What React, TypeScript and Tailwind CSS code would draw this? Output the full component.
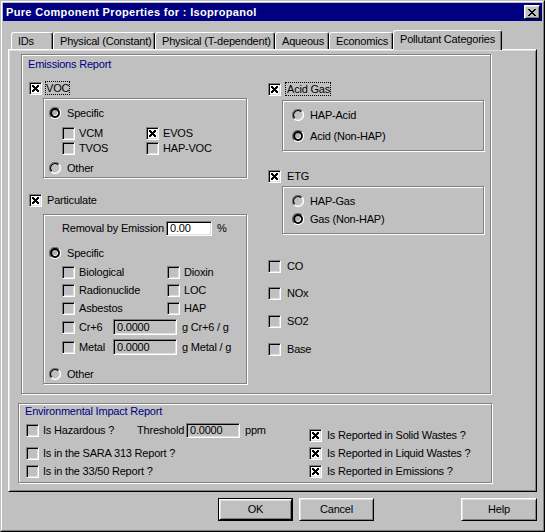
import React from "react";

const X7 = ["xx...xx", "xxx.xxx", ".xxxxx.", "..xxx..", ".xxxxx.", "xxx.xxx", "xx...xx"];
const CLOSE = ["xx....xx", ".xx..xx.", "..xxxx..", "...xx...", "..xxxx..", ".xx..xx.", "xx....xx"];

function PixelArt({ rows, color = "#000" }: { rows: string[]; color?: string }) {
  const w = rows[0].length;
  const h = rows.length;
  return (
    <svg width={w} height={h} viewBox={`0 0 ${w} ${h}`} shapeRendering="crispEdges" className="block shrink-0">
      {rows.flatMap((r, y) =>
        r.split("").map((c, x) =>
          c === "x" ? <rect key={`${x}-${y}`} x={x} y={y} width={1} height={1} fill={color} /> : null
        )
      )}
    </svg>
  );
}

function Box({ checked }: { checked?: boolean }) {
  return (
    <span
      className={
        checked
          ? "flex h-[13px] w-[13px] shrink-0 items-center justify-center border border-t-[#808080] border-l-[#808080] border-r-white border-b-white bg-white shadow-[inset_1px_1px_0_#000,inset_-1px_-1px_0_#dfdfdf]"
          : "flex h-[13px] w-[13px] shrink-0 items-center justify-center border border-t-[#808080] border-l-[#808080] border-r-white border-b-white bg-[#c0c0c0] shadow-[inset_1px_1px_0_#000,inset_-1px_-1px_0_#dfdfdf]"
      }
    >
      {checked && <PixelArt rows={X7} />}
    </span>
  );
}

function Check({
  checked,
  children,
  className = "",
  gap = "ml-[4px]",
}: {
  checked?: boolean;
  children: React.ReactNode;
  className?: string;
  gap?: string;
}) {
  return (
    <div className={`flex h-[13px] items-center ${className}`}>
      <Box checked={checked} />
      <span className={`${gap} whitespace-nowrap`}>{children}</span>
    </div>
  );
}

function Radio({ on }: { on?: boolean }) {
  return (
    <svg width="12" height="12" viewBox="0 0 12 12" className="block shrink-0">
      <circle cx="6" cy="6" r="5.5" fill="#c0c0c0" />
      <path d="M 2.11 9.89 A 5.5 5.5 0 0 1 9.89 2.11" stroke="#707070" strokeWidth="1.3" fill="none" />
      <path d="M 9.89 2.11 A 5.5 5.5 0 0 1 2.11 9.89" stroke="#ffffff" strokeWidth="1.3" fill="none" />
      {on ? (
        <>
          <circle cx="6" cy="6" r="4.9" fill="#000" />
          <circle cx="6" cy="6" r="2.9" fill="#b0b0b0" />
          <path d="M 8.1 4.6 A 2.5 2.5 0 0 1 4.6 8.1" stroke="#fff" strokeWidth="1" fill="none" />
        </>
      ) : (
        <>
          <path d="M 2.82 9.18 A 4.5 4.5 0 0 1 9.18 2.82" stroke="#000" strokeWidth="1.2" fill="none" />
          <path d="M 9.18 2.82 A 4.5 4.5 0 0 1 2.82 9.18" stroke="#dfdfdf" fill="none" />
        </>
      )}
    </svg>
  );
}

function RadioRow({ on, children, className = "" }: { on?: boolean; children: React.ReactNode; className?: string }) {
  return (
    <div className={`flex h-[12px] items-center ${className}`}>
      <Radio on={on} />
      <span className="ml-[6px] whitespace-nowrap">{children}</span>
    </div>
  );
}

function Field({ value, className }: { value: string; className: string }) {
  return (
    <div
      className={`flex shrink-0 items-center border border-t-[#808080] border-l-[#808080] border-r-white border-b-white pl-[3px] shadow-[inset_1px_1px_0_#000,inset_-1px_-1px_0_#dfdfdf] ${className}`}
    >
      {value}
    </div>
  );
}

const GROUP = "border border-[#808080] shadow-[inset_1px_1px_0_#fff,1px_1px_0_#fff]";
const RAISED =
  "border border-t-white border-l-white border-r-black border-b-black shadow-[inset_1px_1px_0_#dfdfdf,inset_-1px_-1px_0_#808080]";

const TAB =
  "flex h-[17px] items-center rounded-t-[3px] border-l border-t border-r border-l-white border-t-white border-r-black pl-[6px] whitespace-nowrap shadow-[inset_-1px_0_0_#808080]";

export default function App() {
  return (
    <div className="h-[532px] w-[545px] border border-t-[#c0c0c0] border-l-[#c0c0c0] border-r-black border-b-black bg-[#c0c0c0] font-['Liberation_Sans',Arial,sans-serif] text-[11px] leading-[13px] tracking-[-0.2px] text-black">
      <div className="flex h-full flex-col border border-t-white border-l-white border-r-[#808080] border-b-[#808080] p-px">
        {/* Title bar */}
        <div className="flex h-[18px] shrink-0 items-center justify-between bg-[#000080] pl-[3px] pr-[2px]">
          <span className="text-[11px] font-bold tracking-[0.33px] text-white">
            Pure Component Properties for : Isopropanol
          </span>
          <span className={`flex h-[14px] w-[16px] items-center justify-center bg-[#c0c0c0] ${RAISED}`}>
            <PixelArt rows={CLOSE} />
          </span>
        </div>

        <div className="flex flex-col px-[5px] pt-[9px]">
          {/* Tabs */}
          <div className="flex h-[19px] items-end pl-[3px]">
            <div className={`${TAB} w-[42px]`}>IDs</div>
            <div className={`${TAB} w-[102px]`}>Physical (Constant)</div>
            <div className={`${TAB} w-[120px]`}>Physical (T-dependent)</div>
            <div className={`${TAB} w-[54px]`}>Aqueous</div>
            <div className={`${TAB} w-[64px]`}>Economics</div>
            <div className="relative z-10 -mb-px flex h-[20px] w-[109px] items-start rounded-t-[3px] border-l border-t border-r border-l-white border-t-white border-r-black bg-[#c0c0c0] pl-[6px] pt-[2px] whitespace-nowrap shadow-[inset_-1px_0_0_#808080]">
              Pollutant Categories
            </div>
          </div>

          {/* Panel */}
          <div className="flex h-[443px] flex-col border border-t-white border-l-white border-r-black border-b-black shadow-[inset_1px_1px_0_#dfdfdf,inset_-1px_-1px_0_#808080]">
            {/* Emissions Report */}
            <div className={`ml-[12px] mt-[4px] flex h-[340px] w-[470px] flex-col ${GROUP}`}>
              <div className="ml-[6px] mt-[3px] h-[13px] text-[#000080]">Emissions Report</div>
              <div className="flex">
                {/* Left column */}
                <div className="ml-[7px] flex w-[218px] flex-col">
                  <div className="mt-[10px] flex h-[14px] items-center">
                    <Box checked />
                    <span className="ml-[3px] flex h-[14px] items-center border border-dotted border-black">VOC</span>
                  </div>
                  <div className={`ml-[14px] mt-[3px] flex h-[80px] w-[204px] flex-col pl-[5px] ${GROUP}`}>
                    <RadioRow on className="mt-[8px]">
                      Specific
                    </RadioRow>
                    <div className="ml-[13px] mt-[8px] grid grid-cols-[84px_auto] gap-y-[2px]">
                      <Check>VCM</Check>
                      <Check checked>EVOS</Check>
                      <Check>TVOS</Check>
                      <Check>HAP-VOC</Check>
                    </div>
                    <RadioRow className="mt-[7px]">Other</RadioRow>
                  </div>

                  <Check checked className="mt-[16px]" gap="ml-[5px]">
                    Particulate
                  </Check>
                  <div className={`ml-[14px] mt-[7px] flex h-[170px] w-[204px] flex-col pl-[5px] ${GROUP}`}>
                    <div className="ml-[13px] mt-[6px] flex h-[15px] items-center">
                      <span className="w-[104px] whitespace-nowrap">Removal by Emission</span>
                      <Field value="0.00" className="h-[15px] w-[46px] bg-white" />
                      <span className="ml-[5px]">%</span>
                    </div>
                    <RadioRow on className="mt-[11px]">
                      Specific
                    </RadioRow>
                    <div className="ml-[13px] mt-[7px] grid grid-cols-[105px_auto] gap-y-[5px]">
                      <Check>Biological</Check>
                      <Check>Dioxin</Check>
                      <Check>Radionuclide</Check>
                      <Check>LOC</Check>
                      <Check>Asbestos</Check>
                      <Check>HAP</Check>
                    </div>
                    <div className="ml-[13px] mt-[4px] flex h-[16px] items-center">
                      <Box />
                      <span className="ml-[4px] w-[34px]">Cr+6</span>
                      <Field value="0.0000" className="h-[16px] w-[64px] bg-[#c0c0c0]" />
                      <span className="ml-[5px] whitespace-nowrap">g Cr+6 / g</span>
                    </div>
                    <div className="ml-[13px] mt-[4px] flex h-[16px] items-center">
                      <Box />
                      <span className="ml-[4px] w-[34px]">Metal</span>
                      <Field value="0.0000" className="h-[16px] w-[64px] bg-[#c0c0c0]" />
                      <span className="ml-[5px] whitespace-nowrap">g Metal / g</span>
                    </div>
                    <RadioRow className="mt-[13px]">Other</RadioRow>
                  </div>
                </div>

                {/* Right column */}
                <div className="ml-[21px] flex flex-col">
                  <div className="mt-[11px] flex h-[14px] items-center">
                    <Box checked />
                    <span className="ml-[4px] flex h-[14px] items-center border border-dotted border-black pl-px">
                      Acid Gas
                    </span>
                  </div>
                  <div className={`ml-[14px] mt-[4px] flex h-[51px] w-[202px] flex-col pl-[9px] ${GROUP}`}>
                    <RadioRow className="mt-[8px]">HAP-Acid</RadioRow>
                    <RadioRow on className="mt-[9px]">
                      Acid (Non-HAP)
                    </RadioRow>
                  </div>

                  <Check checked className="mt-[19px]" gap="ml-[6px]">
                    ETG
                  </Check>
                  <div className={`ml-[14px] mt-[3px] flex h-[48px] w-[202px] flex-col pl-[9px] ${GROUP}`}>
                    <RadioRow className="mt-[8px]">HAP-Gas</RadioRow>
                    <RadioRow on className="mt-[6px]">
                      Gas (Non-HAP)
                    </RadioRow>
                  </div>

                  <Check className="mt-[26px]" gap="ml-[6px]">
                    CO
                  </Check>
                  <Check className="mt-[14px]" gap="ml-[6px]">
                    NOx
                  </Check>
                  <Check className="mt-[15px]" gap="ml-[6px]">
                    SO2
                  </Check>
                  <Check className="mt-[15px]" gap="ml-[6px]">
                    Base
                  </Check>
                </div>
              </div>
            </div>

            {/* Environmental Impact Report */}
            <div className={`ml-[9px] mt-[9px] flex h-[80px] w-[474px] flex-col ${GROUP}`}>
              <div className="ml-[6px] mt-[1px] h-[13px] text-[#000080]">Environmental Impact Report</div>
              <div className="flex">
                <div className="ml-[7px] flex w-[270px] flex-col">
                  <div className="mt-[5px] flex h-[15px] items-center">
                    <Box />
                    <span className="ml-[4px] w-[94px] whitespace-nowrap">Is Hazardous ?</span>
                    <span className="w-[49px] whitespace-nowrap">Threshold</span>
                    <Field value="0.0000" className="h-[15px] w-[54px] bg-[#c0c0c0]" />
                    <span className="ml-[5px]">ppm</span>
                  </div>
                  <Check className="mt-[9px]">Is in the SARA 313 Report ?</Check>
                  <Check className="mt-[5px]">Is in the 33/50 Report ?</Check>
                </div>
                <div className="ml-[13px] flex flex-col">
                  <Check checked className="mt-[11px]" gap="ml-[5px]">
                    Is Reported in Solid Wastes ?
                  </Check>
                  <Check checked className="mt-[5px]" gap="ml-[5px]">
                    Is Reported in Liquid Wastes ?
                  </Check>
                  <Check checked className="mt-[5px]" gap="ml-[5px]">
                    Is Reported in Emissions ?
                  </Check>
                </div>
              </div>
            </div>
          </div>

          {/* Buttons */}
          <div className="mt-[6px] flex h-[23px]">
            <div className="ml-[210px] h-[23px] w-[75px] border border-black">
              <div className={`flex h-full w-full items-center justify-center ${RAISED}`}>OK</div>
            </div>
            <div className={`ml-[6px] flex h-[23px] w-[75px] items-center justify-center ${RAISED}`}>Cancel</div>
            <div className={`ml-auto flex h-[23px] w-[76px] items-center justify-center ${RAISED}`}>Help</div>
          </div>
        </div>
      </div>
    </div>
  );
}
